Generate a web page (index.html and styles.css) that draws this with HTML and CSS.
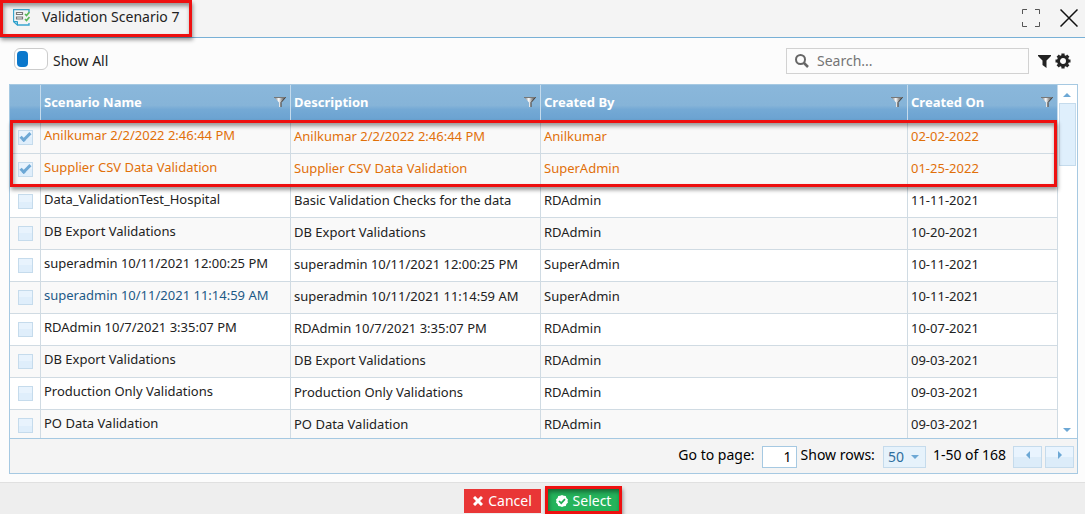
FILE: index.html
```html
<!DOCTYPE html>
<html lang="en">
<head>
<meta charset="utf-8">
<title>Validation Scenario</title>
<link rel="stylesheet" href="styles.css">
</head>
<body>
<svg class="defs" width="0" height="0" aria-hidden="true">
  <defs>
    <linearGradient id="metal" x1="0" x2="1" y1="0" y2="0">
      <stop offset="0" stop-color="#666"/><stop offset=".4" stop-color="#fff"/><stop offset=".6" stop-color="#aaa"/><stop offset="1" stop-color="#333"/>
    </linearGradient>
    <symbol id="funnel" viewBox="0 0 12 12">
      <path d="M0 1h12L7.500 6.500V11H5V6.500z" fill="url(#metal)"/>
      <path d="M0 1.500h12" stroke="#777" fill="none"/>
      <path d="M11.500 1.500L7 6.500V11" stroke="#444" fill="none"/>
    </symbol>
  </defs>
</svg>
<header class="titlebar">
  <div class="title">
    <svg class="doc" viewBox="0 0 17 17" fill="none">
      <path d="M16 3V.5H.5v12l4 3.500H16v-2" stroke="#3aa5cf" stroke-width="1.400"/>
      <path d="M.5 12.500l4 3.500v-3.500z" stroke="#2e9fc9" fill="#8fd0ea"/>
      <path d="M3.500 3.500h6v2h-6zM3.500 8h6v2h-6z" stroke="#777" stroke-width="1.200"/>
      <path d="M12 5l1.500 1.500L16.500 3M12 10l1.500 1.500L16.500 8" stroke="#5bb85b" stroke-width="1.700"/>
    </svg>
    <h1>Validation Scenario 7</h1>
    <span class="mark"></span>
  </div>
  <div class="window-tools">
    <button type="button" aria-label="Maximize"><svg width="18" height="18" viewBox="0 0 18 18" fill="none" stroke="#555"><path d="M.5 5V.5H5M13 .5h4.500V5M17.500 13v4.500H13M5 17.500H.5V13"/></svg></button>
    <button type="button" aria-label="Close"><svg width="18" height="18" viewBox="0 0 18 18" stroke="#111" stroke-width="1.500"><path d="M.5.5l17 17M17.500.5l-17 17"/></svg></button>
  </div>
</header>
<main>
  <div class="toolbar">
    <label class="toggle"><input type="checkbox"><span>Show All</span></label>
    <div class="tools">
      <label class="search">
        <svg width="14" height="14" viewBox="0 0 14 14" fill="none" stroke="#666" stroke-width="2"><circle cx="5.500" cy="5.500" r="4.500"/><path d="M9 9l4 4" stroke-width="2.500"/></svg>
        <input type="text" placeholder="Search..." aria-label="Search">
      </label>
      <button type="button" aria-label="Filter"><svg width="13" height="14" viewBox="0 0 13 14" fill="#222"><path d="M0 1h13v1L8.500 6.500V14l-4-3V6.500L0 2z"/></svg></button>
      <button type="button" aria-label="Settings"><svg width="16" height="16" viewBox="0 0 16 16"><circle cx="8" cy="8" r="4.500" fill="none" stroke="#222" stroke-width="3"/><path d="M8 .5v3M8 12.500v3M.5 8h3M12.500 8h3M2.700 2.700l1.500 1.500M11.800 11.800l1.500 1.500M13.300 2.700l-1.500 1.500M4.200 11.800l-1.500 1.500" stroke="#222" stroke-width="3.200"/></svg></button>
    </div>
  </div>
  <section class="grid">
    <div class="viewport">
      <div class="rows">
        <table>
          <colgroup><col class="c-check"><col class="c-name"><col class="c-desc"><col><col class="c-date"></colgroup>
          <thead><tr>
            <th aria-label="Selected"></th>
            <th><div>Scenario Name<svg><use href="#funnel"/></svg></div></th>
            <th><div>Description<svg><use href="#funnel"/></svg></div></th>
            <th><div>Created By<svg><use href="#funnel"/></svg></div></th>
            <th><div>Created On<svg><use href="#funnel"/></svg></div></th>
          </tr></thead>
          <tbody>
            <tr class="picked"><td><input type="checkbox" checked aria-label="Select row 1"></td><td>Anilkumar 2/2/2022 2:46:44 PM</td><td>Anilkumar 2/2/2022 2:46:44 PM</td><td>Anilkumar</td><td>02-02-2022</td></tr>
            <tr class="picked"><td><input type="checkbox" checked aria-label="Select row 2"></td><td>Supplier CSV Data Validation</td><td>Supplier CSV Data Validation</td><td>SuperAdmin</td><td>01-25-2022</td></tr>
            <tr><td><input type="checkbox" aria-label="Select row 3"></td><td>Data_ValidationTest_Hospital</td><td>Basic Validation Checks for the data</td><td>RDAdmin</td><td>11-11-2021</td></tr>
            <tr><td><input type="checkbox" aria-label="Select row 4"></td><td>DB Export Validations</td><td>DB Export Validations</td><td>RDAdmin</td><td>10-20-2021</td></tr>
            <tr><td><input type="checkbox" aria-label="Select row 5"></td><td>superadmin 10/11/2021 12:00:25 PM</td><td>superadmin 10/11/2021 12:00:25 PM</td><td>SuperAdmin</td><td>10-11-2021</td></tr>
            <tr><td><input type="checkbox" aria-label="Select row 6"></td><td class="hovered">superadmin 10/11/2021 11:14:59 AM</td><td>superadmin 10/11/2021 11:14:59 AM</td><td>SuperAdmin</td><td>10-11-2021</td></tr>
            <tr><td><input type="checkbox" aria-label="Select row 7"></td><td>RDAdmin 10/7/2021 3:35:07 PM</td><td>RDAdmin 10/7/2021 3:35:07 PM</td><td>RDAdmin</td><td>10-07-2021</td></tr>
            <tr><td><input type="checkbox" aria-label="Select row 8"></td><td>DB Export Validations</td><td>DB Export Validations</td><td>RDAdmin</td><td>09-03-2021</td></tr>
            <tr><td><input type="checkbox" aria-label="Select row 9"></td><td>Production Only Validations</td><td>Production Only Validations</td><td>RDAdmin</td><td>09-03-2021</td></tr>
            <tr><td><input type="checkbox" aria-label="Select row 10"></td><td>PO Data Validation</td><td>PO Data Validation</td><td>RDAdmin</td><td>09-03-2021</td></tr>
          </tbody>
        </table>
        <span class="mark"></span>
      </div>
      <div class="scrollbar">
        <i class="arrow up"></i><span class="thumb"></span><i class="arrow down"></i>
      </div>
    </div>
    <div class="pager">
      <label for="page">Go to page:</label><input id="page" type="text" value="1">
      <label for="size">Show rows:</label>
      <span class="size"><select id="size"><option>50</option></select><i class="arrow down"></i></span>
      <span class="range">1-50 of 168</span>
      <button type="button" aria-label="Previous page"><i class="arrow left"></i></button>
      <button type="button" aria-label="Next page"><i class="arrow right"></i></button>
    </div>
  </section>
</main>
<footer>
  <button type="button" class="cancel"><svg width="10" height="10" viewBox="0 0 10 10" stroke="#fff" stroke-width="3"><path d="M1 1l8 8M9 1L1 9"/></svg>Cancel</button>
  <button type="button" class="select"><svg width="12" height="12" viewBox="0 0 12 12"><path d="M6 0l1.800.8 2 .2.600 1.900L12 4.500 11.500 6l.5 1.500-1.600 1.600-.6 1.900-2 .2L6 12l-1.800-.8-2-.2-.6-1.900L0 7.500.5 6 0 4.500l1.600-1.600L2.200 1l2-.2z" fill="#fff"/><path d="M3 6l2.200 2.200L9 4.200" fill="none" stroke="#1fae55" stroke-width="1.700"/></svg>Select<span class="mark"></span></button>
</footer>
</body>
</html>
```
FILE: styles.css
```css
*, ::before { box-sizing: border-box; }
body {
  margin: 0;
  height: 100vh;
  display: flex;
  flex-direction: column;
  overflow: hidden;
  background: #fcfcfc;
  color: #222;
  font: 13px/20px "Noto Sans", sans-serif;
}
button, input, select { font: inherit; color: inherit; margin: 0; }
button { border: 0; padding: 0; background: none; display: flex; align-items: center; justify-content: center; }
.defs { position: absolute; }

/* Highlight frame drawn over the content */
.mark {
  position: absolute;
  inset: 0;
  border: 3px solid #ee1010;
  box-shadow: 1px 3px 4px rgba(0, 0, 0, .4), inset 1px 3px 4px rgba(0, 0, 0, .4);
  pointer-events: none;
}

.titlebar {
  flex: none;
  height: 38px;
  display: flex;
  align-items: center;
  justify-content: space-between;
  background: #f4f4f4;
  border-bottom: 1px solid #78b0d6;
}
.title {
  position: relative;
  z-index: 1;
  height: 37px;
  display: flex;
  align-items: center;
  gap: 12px;
  padding: 0 13px 3px 13px;
}
.title h1 { margin: 0; font-size: 14px; font-weight: 400; line-height: 20px; }
.doc { width: 17px; height: 17px; }
.window-tools { display: flex; gap: 20px; padding: 0 7px 2px 0; }

main { flex: 1; min-height: 0; display: flex; flex-direction: column; padding: 0 7px 8px 9px; }
.toolbar { flex: none; height: 46px; display: flex; justify-content: space-between; align-items: center; padding: 0 7px 0 5px; }
.toggle { display: flex; align-items: center; gap: 5px; font-size: 14px; }
.toggle input {
  appearance: none;
  width: 34px;
  height: 22px;
  margin-bottom: 4px;
  padding: 2px;
  border: 1px solid #ccc;
  border-radius: 6px;
  background: #fff;
}
.toggle input::before { content: ""; display: block; width: 11px; height: 16px; border-radius: 4px; background: #0b78cc; }
.tools { display: flex; align-items: center; gap: 4px; padding-bottom: 1px; }
.search {
  display: flex;
  align-items: center;
  gap: 8px;
  width: 243px;
  height: 26px;
  margin-right: 5px;
  padding: 0 8px;
  border: 1px solid #d2d2d2;
}
.search input { flex: 1; min-width: 0; border: 0; padding: 0; background: none; font-size: 14px; outline: 0; }
.search input::placeholder { color: #757575; opacity: 1; }

.grid { flex: 1; min-height: 0; display: flex; flex-direction: column; border: 1px solid #a6c9e2; background: #fff; }
.viewport { flex: 1; min-height: 0; display: flex; clip-path: inset(0 0 0 -8px); }
.rows { position: relative; flex: 1; min-width: 0; height: 100%; }
.rows > .mark { inset: 35px 1px auto 0; height: 67px; }
table { width: 100%; table-layout: fixed; border-collapse: separate; border-spacing: 0; }
.c-check { width: 31px; }
.c-name, .c-desc { width: 250px; }
.c-date { width: 150px; }
th {
  height: 37px;
  padding: 0 4px 3px 3px;
  border-right: 1px solid #c5dbec;
  background: linear-gradient(#8ab7db 0, #86b4d8 55%, #74a9d5 66%, #69a1d0 100%);
  color: #fff;
  text-align: left;
}
th div { display: flex; align-items: center; justify-content: space-between; }
th svg { width: 12px; height: 12px; }
td {
  height: 32px;
  padding: 0 3px 3px;
  border: solid #d0dbe3;
  border-width: 0 1px 1px 0;
  white-space: nowrap;
}
td:nth-child(2) { padding-bottom: 5px; }
tr:nth-child(even) td, .picked td { background: #f9f9f9; }
.picked { color: #e17009; }
.hovered { color: #1d5987; }
td:first-child { padding: 0 0 1px 8px; font-size: 0; }
td input {
  appearance: none;
  width: 15px;
  height: 15px;
  border: 1px solid #c5dbec;
  background: linear-gradient(#e8f3fd 50%, #dfeefb 50%);
  display: inline-grid;
  place-items: center;
  vertical-align: middle;
}
td input:checked::before {
  content: "";
  width: 11px;
  height: 6px;
  border: solid #6da8d5;
  border-width: 0 0 3px 3px;
  rotate: -45deg;
  margin-bottom: 3px;
}

.scrollbar { width: 19px; display: flex; flex-direction: column; align-items: center; padding: 8px 1px 6px 0; }
.thumb { width: 17px; height: 63px; margin: 6px 0 auto; border: 1px solid #c5dbec; background: #dfeffc; }
.arrow { width: 0; height: 0; border: 4px solid transparent; }
.up { border-top: 0; border-bottom-color: #6da8d5; }
.down { border-bottom: 0; border-top-color: #6da8d5; }
.left { border-left: 0; border-right-color: #6da8d5; }
.right { border-right: 0; border-left-color: #6da8d5; }

.pager {
  flex: none;
  height: 35px;
  display: flex;
  align-items: center;
  justify-content: flex-end;
  gap: 4px;
  padding: 0 3px 2px 0;
  border-top: 1px solid #a6c9e2;
  background: #f4f4f4;
  color: #000;
  font-size: 14px;
}
.pager input { width: 35px; height: 22px; margin-top: 3px; margin-left: 3px; padding: 0 4px; border: 1px solid #a6c9e2; background: #fff; text-align: right; }
.size { position: relative; margin: 3px 3px 0 4px; }
.size select {
  appearance: none;
  display: block;
  width: 43px;
  height: 22px;
  padding: 0 4px;
  border: 1px solid #c5dbec;
  background: #e6f2fb;
  color: #2e6e9e;
}
.size .arrow { position: absolute; right: 7px; top: 9px; }
.range { margin-right: 3px; }
.pager button { width: 29px; height: 22px; margin-top: 3px; padding-bottom: 4px; border: 1px solid #c5dbec; background: linear-gradient(#e9f4fe 50%, #dcecf9 50%); }
.pager button + button { margin-left: -1px; }

footer {
  flex: none;
  height: 32px;
  display: flex;
  justify-content: center;
  gap: 7px;
  padding: 6px 2px 0 0;
  border-top: 1px solid #e0e0e0;
  background: #eee;
}
footer button { position: relative; height: 24px; gap: 5px; color: #fff; font-size: 14px; }
.cancel { width: 77px; background: #e93636; }
.select { width: 71px; background: #25b35b; }
.select .mark { inset: -3px -3px -1px; }
```
